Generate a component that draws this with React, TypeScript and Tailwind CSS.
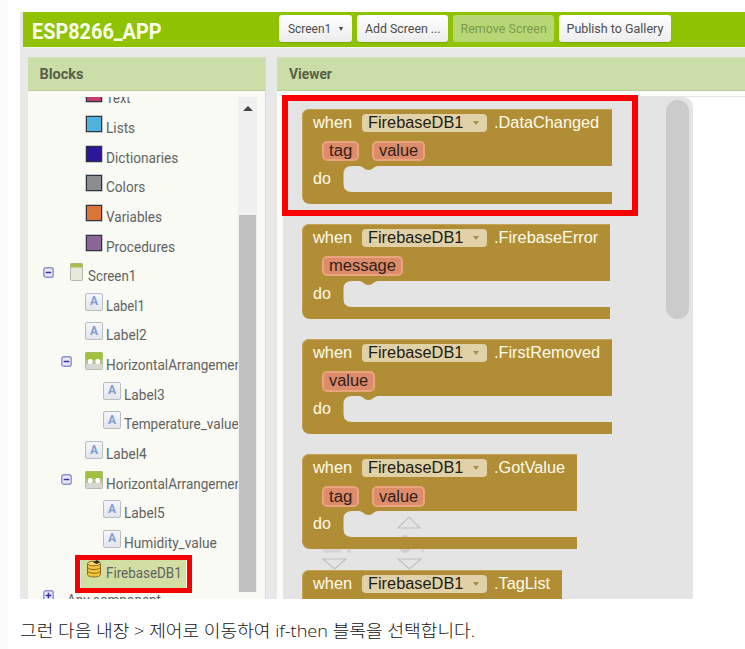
import React from "react";

type Kind = "swatch" | "screen" | "label" | "horizontal" | "database" | "none";

interface TreeRow {
  text: string;
  kind: Kind;
  pad: string;
  color?: string;
  toggle?: "minus" | "plus";
  stretch: string;
  selected?: boolean;
}

const L0 = "pl-[15px]";
const L1 = "pl-[33px]";
const L2 = "pl-[51px]";

const rows: TreeRow[] = [
  { text: "Text", kind: "swatch", color: "bg-[#c33c6c]", pad: L1, stretch: "w-[25px]" },
  { text: "Lists", kind: "swatch", color: "bg-[#4fb3dc]", pad: L1, stretch: "w-[29px]" },
  { text: "Dictionaries", kind: "swatch", color: "bg-[#2c169a]", pad: L1, stretch: "w-[72px]" },
  { text: "Colors", kind: "swatch", color: "bg-[#8b8d8e]", pad: L1, stretch: "w-[39px]" },
  { text: "Variables", kind: "swatch", color: "bg-[#de7338]", pad: L1, stretch: "w-[56px]" },
  { text: "Procedures", kind: "swatch", color: "bg-[#8b6797]", pad: L1, stretch: "w-[69px]" },
  { text: "Screen1", kind: "screen", pad: L0, toggle: "minus", stretch: "w-[48px]" },
  { text: "Label1", kind: "label", pad: L1, stretch: "w-[39px]" },
  { text: "Label2", kind: "label", pad: L1, stretch: "w-[41px]" },
  { text: "HorizontalArrangement1", kind: "horizontal", pad: L1, toggle: "minus", stretch: "w-[148px]" },
  { text: "Label3", kind: "label", pad: L2, stretch: "w-[41px]" },
  { text: "Temperature_value", kind: "label", pad: L2, stretch: "w-[115px]" },
  { text: "Label4", kind: "label", pad: L1, stretch: "w-[41px]" },
  { text: "HorizontalArrangement2", kind: "horizontal", pad: L1, toggle: "minus", stretch: "w-[148px]" },
  { text: "Label5", kind: "label", pad: L2, stretch: "w-[41px]" },
  { text: "Humidity_value", kind: "label", pad: L2, stretch: "w-[93px]" },
  { text: "FirebaseDB1", kind: "database", pad: L1, stretch: "w-[76px]", selected: true },
  { text: "Any component", kind: "none", pad: L0, toggle: "plus", stretch: "w-[94px]" },
];

function Toggle({ type }: { type: "minus" | "plus" }) {
  return (
    <svg width="11" height="11" viewBox="0 0 11 11" className="block">
      <rect x="0.8" y="0.8" width="9.4" height="9.4" rx="2" fill="#e6e8f8" stroke="#8d8fcb" strokeWidth="1.4" />
      <path d={type === "minus" ? "M2.7 5.5h5.6" : "M2.7 5.5h5.6M5.5 2.7v5.6"} stroke="#34349a" strokeWidth="1.5" />
    </svg>
  );
}

function Icon({ kind, color }: { kind: Kind; color?: string }) {
  if (kind === "swatch") {
    return <div className={`h-4 w-4 border border-[#2a3440] ring-[0.5px] ring-[#2a3440]/50 ${color}`} />;
  }
  if (kind === "label") {
    return (
      <div className="flex h-[18px] w-[18px] items-center justify-center rounded-[2px] border border-[#b9bcc1] bg-gradient-to-b from-[#f4f6fa] to-[#e2e5ea] pb-px text-[12px] font-bold leading-none text-[#7f9fd3]">
        A
      </div>
    );
  }
  if (kind === "screen") {
    return (
      <svg width="13" height="18" viewBox="0 0 13 18">
        <rect x="0.5" y="0.5" width="12" height="17" rx="1" fill="#e5e8dd" stroke="#b5b8ab" />
        <path d="M0.5 0.5h12v4h-12z" fill="#a8bd4f" />
      </svg>
    );
  }
  if (kind === "horizontal") {
    return (
      <svg width="18" height="18" viewBox="0 0 18 18">
        <rect x="0.5" y="0.5" width="17" height="17" rx="1" fill="#d6d9d1" stroke="#b7bcb0" />
        <path d="M0.5 1a1 1 0 0 1 1-.7h15a1 1 0 0 1 1 .7v7h-17z" fill="#a1c03f" />
        <path d="M0.5 8h17v4h-17z" fill="#b3c58a" />
        <rect x="3" y="7" width="4.500" height="5" rx="1.500" fill="#fff" />
        <rect x="10.500" y="7" width="4.500" height="5" rx="1.500" fill="#fff" />
      </svg>
    );
  }
  return (
    <svg width="16" height="18" viewBox="0 0 16 18">
      <path d="M1.5 3.5v11c0 1.5 3 2.5 6.500 2.500s6.500-1 6.500-2.500v-11z" fill="#f3c63d" stroke="#8c641b" />
      <ellipse cx="8" cy="3.500" rx="6.500" ry="2.300" fill="#f8da70" stroke="#8c641b" />
      <path d="M1.500 7.300c1 3 12 3 13 0M1.500 11c1 3 12 3 13 0" fill="none" stroke="#8c641b" />
      <path d="M7 2.500l4-2.500 3 2-3 2z" fill="#3b2718" />
    </svg>
  );
}

function Fit({ text, box, className = "" }: { text: string; box: string; className?: string }) {
  const outer = React.useRef<HTMLDivElement>(null);
  const inner = React.useRef<HTMLSpanElement>(null);
  const [s, setS] = React.useState(1);
  React.useLayoutEffect(() => {
    if (outer.current && inner.current) setS(outer.current.offsetWidth / inner.current.offsetWidth);
  }, []);
  return (
    <div ref={outer} className={`shrink-0 whitespace-nowrap ${box} ${className}`}>
      <span ref={inner} className="inline-block origin-left" style={{ transform: `scaleX(${s})` }}>
        {text}
      </span>
    </div>
  );
}

function Row({ r }: { r: TreeRow }) {
  return (
    <div className={`relative flex h-[29.65px] shrink-0 items-center ${r.pad} ${r.kind === "none" ? "-mt-[2.500px]" : ""}`}>
      {r.selected && <div className="absolute left-[53px] top-0 h-[30px] w-[105px] bg-[#d2dfa3]" />}
      <div className="relative mb-2 w-[11px] shrink-0">{r.toggle && <Toggle type={r.toggle} />}</div>
      {r.kind === "none" ? (
        <div className="w-[13px] shrink-0" />
      ) : (
        <div className="relative ml-[13px] mr-[3px] mb-2 flex w-[18px] shrink-0 justify-center">
          <Icon kind={r.kind} color={r.color} />
        </div>
      )}
      <Fit text={r.text} box={r.stretch} className="relative text-[15px] leading-5 text-[#626262]" />
      {r.selected && (
        <div className="absolute left-[47px] top-[-3px] z-10 h-[38px] w-[117px] border-[5.5px] border-[#f40000]" />
      )}
    </div>
  );
}

function BarButton({ text, box, fit, disabled, caret }: { text: string; box: string; fit: string; disabled?: boolean; caret?: boolean }) {
  const look = disabled
    ? "bg-[#b7d775] text-[#7d9a4c]"
    : "bg-gradient-to-b from-white to-[#ececec] text-[#4c4c4c] shadow-[0_1px_1px_rgba(0,0,0,0.15)]";
  return (
    <div className={`flex h-[27px] shrink-0 items-center justify-center gap-[8px] rounded-[3px] ${box} ${look}`}>
      <Fit text={text} box={fit} className="text-[12.500px] leading-4" />
      {caret && <div className="border-x-[2.500px] border-t-[4px] border-x-transparent border-t-[#444]" />}
    </div>
  );
}

interface BlockProps {
  event: string;
  eventBox: string;
  params: { name: string; box: string; fit: string }[];
  width: number;
  headerOnly?: boolean;
}

function EventBlock({ event, eventBox, params, width, headerOnly }: BlockProps) {
  const w = width;
  const shape = `M8 0H${w}V57H76c-4 0-5 4-9.500 4s-5.500-4-9.500-4H50Q41.500 57 41.500 65V75Q41.500 83 50 83H${w}V95H9Q0 95 0 86V8Q0 0 8 0Z`;
  return (
    <div className="relative mb-[20.300px] h-[95px] shrink-0 font-['Liberation_Sans',Arial,sans-serif] text-[16px] leading-[18px]">
      <svg className="absolute left-0 top-0 overflow-visible" width={w} height="95">
        <path d={shape} fill="#b18e35" />
        <path d={`M0.500 86V8Q0.500 0.500 8 0.500H${w}`} fill="none" stroke="#c3a655" />
      </svg>
      <div className="relative flex h-8 items-start pl-[11px] pt-[5px] text-[#fffbea]">
        <Fit text="when" box="w-[39px]" />
        <div className="ml-[10px] flex h-[18px] w-[125px] items-center rounded-[4px] bg-[#e0d1a8] pl-[6px] text-[#1f1c14]">
          <Fit text="FirebaseDB1" box="w-[95px]" />
          <div className="ml-[10px] border-x-[3px] border-t-[4px] border-x-transparent border-t-[#a68c4d]" />
        </div>
        <Fit text={event} box={eventBox} className="ml-[7px]" />
      </div>
      {!headerOnly && (
        <>
          <div className="relative flex h-[21px] gap-[13px] pl-[20px]">
            {params.map((p) => (
              <div key={p.name} className={`flex h-[20.500px] items-center justify-center rounded-[5px] border-2 border-[#eaa47c] bg-[#dc8b6b] text-[#301f18] ${p.box}`}>
                <Fit text={p.name} box={p.fit} />
              </div>
            ))}
          </div>
          <div className="relative mt-[8px] pl-[11px] text-[#fffbea]">
            <Fit text="do" box="w-[18px]" />
          </div>
        </>
      )}
    </div>
  );
}

const tag = { name: "tag", box: "w-[37px]", fit: "w-[23px]" };
const value = { name: "value", box: "w-[53px]", fit: "w-[39px]" };
const message = { name: "message", box: "w-[81px]", fit: "w-[67px]" };

export default function App() {
  return (
    <div className="flex h-[649px] w-[745px] overflow-hidden bg-white font-[Roboto,sans-serif]">
      <div className="w-2 shrink-0 bg-[#fafafa]" />
      <div className="flex w-[737px] flex-col pl-3 pt-3">
        <div className="flex h-[587px] w-[725px] shrink-0 flex-col overflow-hidden bg-[#e8e8e8]">
          <header className="ml-[3px] flex h-[36px] shrink-0 items-start border-b border-[#f4f7ec] bg-[#8fc302] pl-[9px] pt-[3px]">
            <Fit text="ESP8266_APP" box="w-[130px]" className="mt-[3px] text-[22px] font-bold leading-7 text-[#fbffee]" />
            <div className="ml-[117px] flex gap-[6px]">
              <BarButton text="Screen1" box="w-[73px]" fit="w-[43px]" caret />
              <div className="-ml-px">
                <BarButton text="Add Screen ..." box="w-[91px]" fit="w-[76px]" />
              </div>
              <div className="-ml-[1px]">
                <BarButton text="Remove Screen" box="w-[101px]" fit="w-[86px]" disabled />
              </div>
              <div className="-ml-[1px]">
                <BarButton text="Publish to Gallery" box="w-[112px]" fit="w-[97px]" />
              </div>
            </div>
          </header>
          <div className="flex flex-1 gap-[11px] pl-[8px] pt-[9px]">
            <section className="flex h-[542px] w-[238px] shrink-0 flex-col border-r border-[#dcdcdc] bg-[#f8faf3]">
              <div className="flex h-[34px] shrink-0 items-center border-b border-t border-b-[#b9c99a] border-t-[#d5dfc0] bg-[#cbdda8] pl-[11.500px] pt-[2px]">
                <Fit text="Blocks" box="w-[44px]" className="text-[14.500px] font-bold leading-5 text-[#586046]" />
              </div>
              <div className="mt-[6px] flex h-[502px] overflow-hidden">
                <div className="w-[210px] shrink-0 overflow-hidden">
                  <div className="-mt-[13.500px] flex flex-col">
                    {rows.map((r, i) => (
                      <Row key={i} r={r} />
                    ))}
                  </div>
                </div>
                <div className="flex h-[495px] w-[19px] shrink-0 flex-col items-center bg-[#f0f0f0]">
                  <div className="mt-[9px] border-x-[5px] border-b-[5px] border-x-transparent border-b-[#444]" />
                  <div className="mt-[104px] w-[17px] flex-1 bg-[#c1c1c1]" />
                </div>
              </div>
            </section>
            <section className="flex h-[542px] flex-1 flex-col bg-[#fcfdf8]">
              <div className="flex h-[34px] shrink-0 items-center border-b border-t border-b-[#b9c99a] border-t-[#d5dfc0] bg-[#cbdda8] pl-[12px] pt-[2px]">
                <Fit text="Viewer" box="w-[43px]" className="text-[14.500px] font-bold leading-5 text-[#586046]" />
              </div>
              <div className="ml-[6px] mt-[5px] flex-1 border-t border-[#e2e8e0] bg-white">
                <div className="relative flex h-[502px] w-[410px] justify-between rounded-tr-[10px] bg-[#e4e4e4]">
                  <div className="absolute -left-px top-[-2px] z-10 h-[121px] w-[356px] border-[6px] border-[#fb0000]" />
                  <svg className="absolute left-0 top-0" width="200" height="502" fill="none" stroke="#c0c0c0" strokeWidth="1.200">
                    <path d="M115 431l11-11 11 11zM40 462h23l-11.500 10zM115 462h23l-11.500 10z" />
                    <ellipse cx="122" cy="447" rx="7" ry="9" fill="#d4cccc" stroke="none" />
                    <path d="M40 454h18M64 454h4M138 454h3" stroke="#d9d1d1" strokeWidth="3" />
                  </svg>
                  <div className="relative ml-[19px] flex h-[502px] w-[330px] flex-col overflow-hidden pt-[11.500px]">
                    <EventBlock event=".DataChanged" eventBox="w-[105px]" params={[tag, value]} width={310} />
                    <EventBlock event=".FirebaseError" eventBox="w-[104px]" params={[message]} width={308} />
                    <EventBlock event=".FirstRemoved" eventBox="w-[106px]" params={[value]} width={310} />
                    <EventBlock event=".GotValue" eventBox="w-[71px]" params={[tag, value]} width={275} />
                    <EventBlock event=".TagList" eventBox="w-[56px]" params={[]} width={260} headerOnly />
                  </div>
                  <div className="mr-[4px] mt-[3px] h-[219px] w-[23px] rounded-full bg-[#cbcbcb]" />
                </div>
              </div>
            </section>
          </div>
        </div>
        <div className="mt-[20px]">
          <Fit
            text="그런 다음 내장 > 제어로 이동하여 if-then 블록을 선택합니다."
            box="w-[455px]"
            className="font-['Open_Sans','Noto_Sans_CJK_KR',sans-serif] text-[17px] font-light leading-6 text-[#111]"
          />
        </div>
      </div>
    </div>
  );
}
